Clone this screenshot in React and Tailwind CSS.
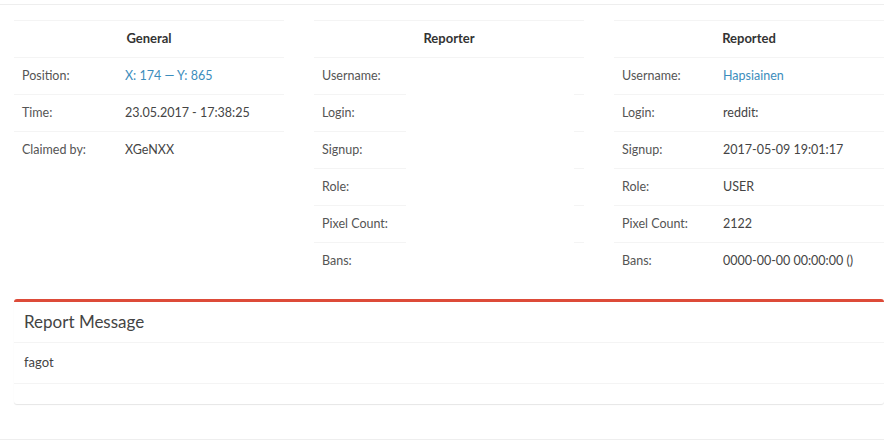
const general = [
  { label: 'Position:', value: 'X: 174 — Y: 865', link: true },
  { label: 'Time:', value: '23.05.2017 - 17:38:25' },
  { label: 'Claimed by:', value: 'XGeNXX' },
];

const reporter = ['Username:', 'Login:', 'Signup:', 'Role:', 'Pixel Count:', 'Bans:'];

const reported = [
  { label: 'Username:', value: 'Hapsiainen', link: true },
  { label: 'Login:', value: 'reddit:' },
  { label: 'Signup:', value: '2017-05-09 19:01:17' },
  { label: 'Role:', value: 'USER' },
  { label: 'Pixel Count:', value: '2122' },
  { label: 'Bans:', value: '0000-00-00 00:00:00 ()' },
];

function Header({ title }) {
  return (
    <div className="h-[37px] border-t border-[#f4f4f4] flex items-center justify-center text-[13px] font-bold text-[#333]">
      {title}
    </div>
  );
}

function InfoTable({ title, rows, labelWidth }) {
  return (
    <div className="w-[270px]">
      <Header title={title} />
      {rows.map((r) => (
        <div key={r.label} className="h-[37px] border-t border-[#f4f4f4] flex items-center text-[12.5px]">
          <span className="pl-2 text-[#555]" style={{ width: labelWidth }}>{r.label}</span>
          <span className={`pl-2 ${r.link ? 'text-[#3c8dbc]' : 'text-[#444]'}`}>{r.value}</span>
        </div>
      ))}
    </div>
  );
}

function ReporterTable() {
  return (
    <div className="w-[270px]">
      <Header title="Reporter" />
      {reporter.map((label, i) => (
        <div key={label} className={`h-[37px] flex text-[12.5px] ${i === 0 ? 'border-t border-[#f4f4f4]' : ''}`}>
          <div className={`w-[92px] pl-2 flex items-center text-[#555] ${i > 0 ? 'border-t border-[#f4f4f4]' : ''}`}>{label}</div>
          <div className="flex-1" />
          <div className={`w-[10px] ${i > 0 ? 'border-t border-[#f4f4f4]' : ''}`} />
        </div>
      ))}
    </div>
  );
}

export default function App() {
  return (
    <div className="w-[884px] h-[448px] bg-white overflow-hidden font-['Lato',sans-serif]">
      <div className="h-[4px]" />
      <div className="border-t border-[#eeeeee] pt-[15px]">
        <div className="ml-[14px] w-[870px] flex gap-[30px] h-[259px]">
          <InfoTable title="General" rows={general} labelWidth={103} />
          <ReporterTable />
          <InfoTable title="Reported" rows={reported} labelWidth={101} />
        </div>

        <div className="ml-[14px] w-[870px] mt-[20px] bg-white border-t-[3px] border-[#dd4b39] rounded-[3px] shadow-[0_1px_1px_rgba(0,0,0,0.1)]">
          <div className="h-[41px] px-[10px] flex items-center border-b border-[#f4f4f4]">
            <h3 className="text-[17px] font-normal text-[#444]">Report Message</h3>
          </div>
          <div className="h-[40px] px-[10px] flex items-center text-[13px] text-[#444]">fagot</div>
          <div className="h-[21px] border-t border-[#f4f4f4]" />
        </div>

        <div className="mt-[35px] border-t border-[#eeeeee]" />
      </div>
    </div>
  );
}
